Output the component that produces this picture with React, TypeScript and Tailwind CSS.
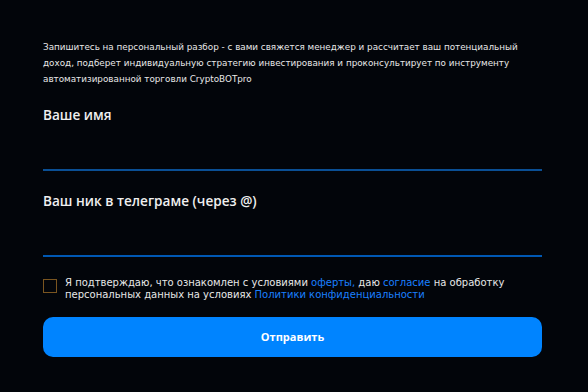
export default function App() {
  return (
    <div className="h-[392px] w-[588px] bg-[#02050a] pl-[43px] pr-[46px] pt-[39px] text-white">
      <p
        className="whitespace-nowrap text-[8.8px] leading-[16px] text-[#e8e8e8]"
        style={{ fontFamily: '"DejaVu Sans", sans-serif' }}
      >
        Запишитесь на персональный разбор - с вами свяжется менеджер и рассчитает ваш потенциальный
        <br />
        доход, подберет индивидуальную стратегию инвестирования и проконсультирует по инструменту
        <br />
        автоматизированной торговли CryptoBOTpro
      </p>

      <Field label="Ваше имя" line="bg-[#0a4f94]" className="mt-[19px]" />
      <Field label="Ваш ник в телеграме (через @)" line="bg-[#0058b3]" className="mt-[21px]" />

      <div className="mt-[20px] flex items-start gap-[8px]">
        <span className="mt-[2px] h-[14px] w-[14px] shrink-0 border border-[#7a5520]" />
        <p
          className="whitespace-nowrap text-[10px] leading-[12px] text-[#e8e8e8]"
          style={{ fontFamily: '"DejaVu Sans", sans-serif' }}
        >
          Я подтверждаю, что ознакомлен с условиями <span className="text-[#1a80ff]">оферты,</span> даю{' '}
          <span className="text-[#1a80ff]">согласие</span> на обработку
          <br />
          персональных данных на условиях <span className="text-[#1a80ff]">Политики конфиденциальности</span>
        </p>
      </div>

      <button
        className="mt-[16px] flex h-[40px] w-full items-center justify-center rounded-[10px] bg-[#0084ff] text-[11px] font-bold text-white"
        style={{ fontFamily: '"Open Sans", sans-serif' }}
      >
        Отправить
      </button>
    </div>
  )
}

function Field({ label, line, className }: { label: string; line: string; className?: string }) {
  return (
    <div className={className}>
      <div
        className="text-[13.6px] font-semibold leading-[18px] text-[#f0f0f0]"
        style={{ fontFamily: '"Open Sans", sans-serif' }}
      >
        {label}
      </div>
      <div className={`mt-[45px] h-[2px] w-full ${line}`} />
    </div>
  )
}
